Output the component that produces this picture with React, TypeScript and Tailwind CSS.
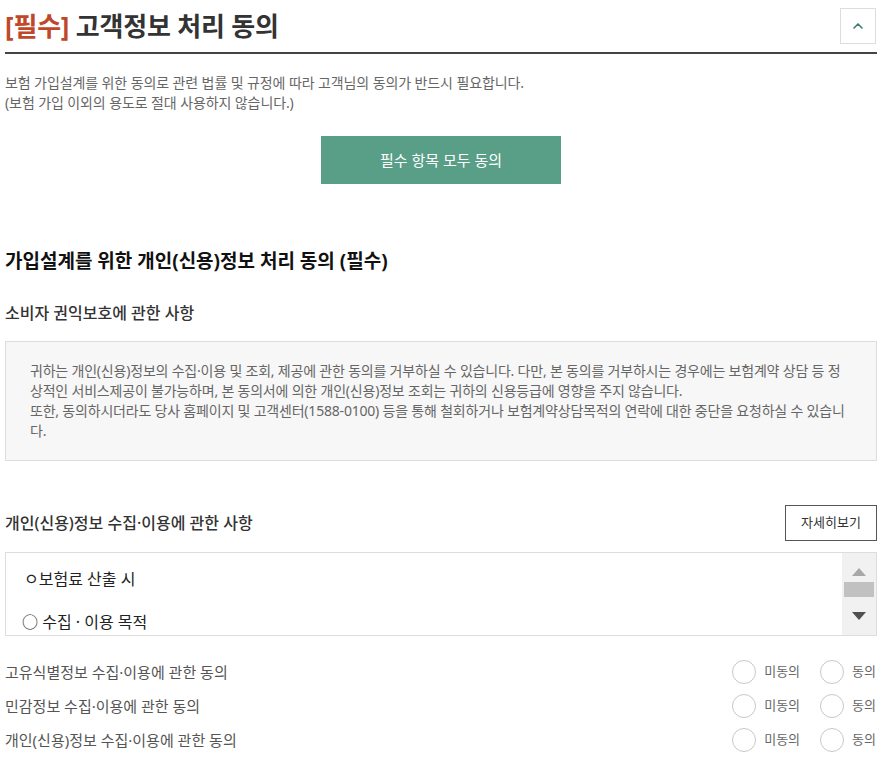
import { ChevronUp } from "lucide-react";

const agreeItems = [
  "고유식별정보 수집·이용에 관한 동의",
  "민감정보 수집·이용에 관한 동의",
  "개인(신용)정보 수집·이용에 관한 동의",
];

const RadioOption = ({ label }: { label: string }) => (
  <label className="flex items-center gap-2 cursor-pointer">
    <span className="w-6 h-6 rounded-full border border-[#c8c8c8] bg-white" />
    <span className="text-[13px] text-[#666]">{label}</span>
  </label>
);

export default function App() {
  return (
    <div
      className="bg-white min-h-screen pl-[5px] pr-[17px] pb-6"
      style={{ fontFamily: '"Noto Sans", "Noto Sans CJK KR", sans-serif' }}
    >
      {/* header */}
      <div className="pt-2 pb-2 border-b-2 border-[#444] flex items-center justify-between">
        <h1 className="text-[26px] leading-9 font-bold text-[#333] tracking-[-0.2px]">
          <span className="text-[#c0482a]">[필수]</span> 고객정보 처리 동의
        </h1>
        <button className="w-9 h-9 border border-[#ddd] flex items-center justify-center mr-[1px]">
          <ChevronUp size={16} strokeWidth={2.5} color="#3f7e73" />
        </button>
      </div>

      <div className="mt-[19px] text-[14px] leading-5 text-[#666] tracking-[-0.1px]">
        <p>보험 가입설계를 위한 동의로 관련 법률 및 규정에 따라 고객님의 동의가 반드시 필요합니다.</p>
        <p>(보험 가입 이외의 용도로 절대 사용하지 않습니다.)</p>
      </div>

      <div className="mt-[23px] flex justify-center">
        <button className="w-[240px] h-12 bg-[#599e87] text-white text-[15px]">
          필수 항목 모두 동의
        </button>
      </div>

      <h2 className="mt-16 text-[19px] leading-[26px] font-bold text-[#111]">
        가입설계를 위한 개인(신용)정보 처리 동의 (필수)
      </h2>

      <h3 className="mt-7 text-[16px] leading-[22px] font-medium text-[#333]">
        소비자 권익보호에 관한 사항
      </h3>

      <div className="mt-[17px] bg-[#f7f7f7] border border-[#ddd] px-[24px] py-[19px] text-[14px] leading-5 text-[#666] break-all tracking-[-0.2px]">
        <p>
          귀하는 개인(신용)정보의 수집·이용 및 조회, 제공에 관한 동의를 거부하실 수 있습니다. 다만, 본 동의를 거부하시는 경우에는 보험계약 상담 등 정상적인 서비스제공이 불가능하며, 본 동의서에 의한 개인(신용)정보 조회는 귀하의 신용등급에 영향을 주지 않습니다.
        </p>
        <p>
          또한, 동의하시더라도 당사 홈페이지 및 고객센터(1588-0100) 등을 통해 철회하거나 보험계약상담목적의 연락에 대한 중단을 요청하실 수 있습니다.
        </p>
      </div>

      <div className="mt-11 flex items-center justify-between">
        <h3 className="text-[16px] font-medium text-[#333]">개인(신용)정보 수집·이용에 관한 사항</h3>
        <button className="w-[92px] h-9 border border-[#555] text-[13px] text-[#333]">자세히보기</button>
      </div>

      <div className="mt-[11px] h-[84px] border border-[#ddd] flex overflow-hidden">
        <div className="flex-1 pl-[18px] pt-[15px] text-[16px] text-[#222] overflow-hidden">
          <p className="leading-[22px]">ㅇ보험료 산출 시</p>
          <p className="mt-[21px] leading-[22px] -ml-[2px]">○ 수집 · 이용 목적</p>
        </div>
        {/* scrollbar */}
        <div className="w-[34px] bg-[#f1f1f1] flex flex-col items-center pt-[14px]">
          <svg width="16" height="10" viewBox="0 0 16 10">
            <polygon points="8,1 15,9 1,9" fill="#a8a8a8" />
          </svg>
          <div className="mt-[5px] w-[30px] h-[15px] bg-[#c1c1c1]" />
          <svg className="mt-[14px]" width="16" height="10" viewBox="0 0 16 10">
            <polygon points="1,1 15,1 8,9" fill="#505050" />
          </svg>
        </div>
      </div>

      <div className="mt-[19px] flex flex-col">
        {agreeItems.map((item) => (
          <div key={item} className="h-[34px] flex items-center justify-between">
            <span className="text-[15px] text-[#555]">{item}</span>
            <div className="flex items-center gap-5 mr-[1px]">
              <RadioOption label="미동의" />
              <RadioOption label="동의" />
            </div>
          </div>
        ))}
      </div>
    </div>
  );
}
